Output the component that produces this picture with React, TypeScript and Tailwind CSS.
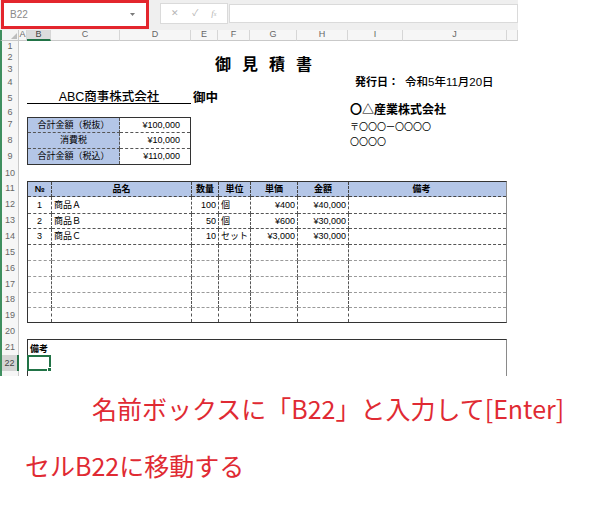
import React from "react";

// literal class lists so tailwind can see them
const ROW_START = [
  "row-start-2", "row-start-3", "row-start-4", "row-start-5", "row-start-6",
  "row-start-7", "row-start-8", "row-start-9", "row-start-10", "row-start-11",
  "row-start-12", "row-start-13", "row-start-14", "row-start-15", "row-start-16",
  "row-start-17", "row-start-18", "row-start-19", "row-start-20", "row-start-21",
  "row-start-22", "row-start-23", "row-start-24",
];

const COL_LABELS = ["A", "B", "C", "D", "E", "F", "G", "H", "I", "J", ""];

const HEADERS = ["№", "品名", "数量", "単位", "単価", "金額", "備考"];

const ITEMS = [
  ["1", "商品Ａ", "100", "個", "¥400", "¥40,000", ""],
  ["2", "商品Ｂ", "50", "個", "¥600", "¥30,000", ""],
  ["3", "商品Ｃ", "10", "セット", "¥3,000", "¥30,000", ""],
  ["", "", "", "", "", "", ""],
  ["", "", "", "", "", "", ""],
  ["", "", "", "", "", "", ""],
  ["", "", "", "", "", "", ""],
  ["", "", "", "", "", "", ""],
];

const ALIGN = [
  "justify-center",
  "justify-start pl-[2px]",
  "justify-end pr-[2px]",
  "justify-start pl-[2px]",
  "justify-end pr-[2px]",
  "justify-end pr-[2px]",
  "justify-start pl-[2px]",
];

const TOTALS = [
  ["合計金額（税抜）", "¥100,000"],
  ["消費税", "¥10,000"],
  ["合計金額（税込）", "¥110,000"],
];

const App = () => {
  return (
    <div className="w-[600px] h-[505px] bg-white overflow-hidden font-['Liberation_Sans','Noto_Sans_CJK_JP',sans-serif] text-black">
      {/* Excel window */}
      <div className="w-[518px]">
        {/* Name box + formula bar */}
        <div className="h-[30px] bg-[#efefef] flex items-start">
          <div className="ml-[1px] w-[148px] h-[29px] border-[3px] border-[#e3262d] bg-white flex items-center justify-between pl-[6px] pr-[11px]">
            <span className="text-[10px] text-[#8a8a8a]">B22</span>
            <svg width="5" height="3" viewBox="0 0 5 3">
              <path d="M0 0h5L2.5 3z" fill="#7a7a7a" />
            </svg>
          </div>
          <div className="ml-[11px] mt-[3px] w-[68px] h-[21px] bg-white border border-[#dadada] flex items-center justify-around px-[4px] text-[#b5b5b5]">
            <span className="text-[9px]">✕</span>
            <span className="text-[9px]">✓</span>
            <span className="text-[9px] italic font-['Liberation_Serif',serif]">
              f<span className="text-[6px]">x</span>
            </span>
          </div>
          <div className="ml-[1px] mt-[4px] flex-1 h-[19px] bg-white border border-[#dadada]" />
        </div>

        {/* Sheet grid */}
        <div className="grid grid-cols-[19px_8px_24px_69px_71px_27px_32px_47px_51px_55px_104px_11px] grid-rows-[11px_10px_13px_11px_15px_17px_10px_15px_16px_17px_16px_15px_17px_15px_16px_16px_16px_16px_15px_16px_16px_16px_16px_5px]">
          {/* corner */}
          <div className="row-start-1 relative bg-[#f4f4f4] border-r border-b border-[#c9c9c9] border-l-2 border-l-[#3f8f5f]">
            <div className="absolute right-[1px] bottom-[1px] w-0 h-0 border-l-[6px] border-l-transparent border-b-[6px] border-b-[#bdbdbd]" />
          </div>
          {COL_LABELS.map((c, i) => (
            <div
              key={i}
              className={
                "row-start-1 flex items-center justify-center text-[9px] border-r border-[#d6d6d6] " +
                (c === "B"
                  ? "bg-[#dcdcdc] border-b-2 border-b-[#217346] text-[#444]"
                  : "bg-[#f6f6f6] border-b border-b-[#c9c9c9] text-[#666]")
              }
            >
              {c}
            </div>
          ))}

          {/* row headers */}
          {ROW_START.map((r, i) => (
            <div
              key={r}
              className={
                "col-start-1 flex items-center justify-center text-[9px] leading-none border-l-2 border-l-[#3f8f5f] " +
                r +
                (i === 21
                  ? " bg-[#d4d4d4] border-r-2 border-r-[#217346] text-[#444]"
                  : " bg-[#f6f6f6] border-r border-r-[#c9c9c9] text-[#666]")
              }
            >
              {i < 22 ? i + 1 : ""}
            </div>
          ))}

          {/* Title */}
          <div className="col-start-2 col-span-11 row-start-3 row-span-2 flex items-center pl-[196px] text-[16px] font-bold tracking-[11px] leading-none font-['Noto_Sans_CJK_JP',sans-serif]">
            御見積書
          </div>

          {/* Issue date */}
          <div className="col-start-10 col-span-3 row-start-5 flex items-center pl-[7px] text-[11px] leading-none whitespace-nowrap">
            <span className="font-bold">発行日：</span>
            <span className="ml-[6px] text-[11.5px] font-medium">令和5年11月20日</span>
          </div>

          {/* Customer */}
          <div className="col-start-3 col-span-3 row-start-6 mb-[3px] border-b border-black flex items-end justify-center text-[12.5px] leading-none font-medium whitespace-nowrap">
            ABC商事株式会社
          </div>
          <div className="col-start-6 col-span-2 row-start-6 mb-[3px] flex items-end pl-[2px] text-[12.5px] leading-none font-semibold whitespace-nowrap">
            御中
          </div>

          {/* Supplier */}
          <div className="col-start-10 col-span-3 row-start-7 flex items-end pb-[1px] pl-[2px] text-[12px] leading-none font-bold whitespace-nowrap">
            〇△産業株式会社
          </div>
          <div className="col-start-10 col-span-3 row-start-8 flex items-end pb-[1px] pl-[2px] text-[9px] leading-none whitespace-nowrap font-['Noto_Sans_CJK_JP',sans-serif]">
            〒〇〇〇ー〇〇〇〇
          </div>
          <div className="col-start-10 col-span-3 row-start-9 flex items-end pb-[2px] pl-[2px] text-[9px] leading-none whitespace-nowrap font-['Noto_Sans_CJK_JP',sans-serif]">
            〇〇〇〇
          </div>

          {/* Totals */}
          <div className="col-start-3 col-span-3 row-start-8 row-span-3 border border-[#333] grid grid-cols-[92px_1fr] grid-rows-[15px_16px_1fr]">
            {TOTALS.map(([label, value], i) => (
              <React.Fragment key={label}>
                <div
                  className={
                    "bg-[#b4c6e7] flex items-center justify-center text-[9px] leading-none border-r border-dashed border-[#555] " +
                    (i < 2 ? "border-b" : "")
                  }
                >
                  {label}
                </div>
                <div
                  className={
                    "flex items-center justify-end pr-[10px] text-[9px] leading-none border-dashed border-[#555] " +
                    (i < 2 ? "border-b" : "")
                  }
                >
                  {value}
                </div>
              </React.Fragment>
            ))}
          </div>

          {/* Items table */}
          <div className="col-start-3 col-span-9 row-start-12 row-span-9 border border-[#333] border-r-[#8a8a8a] grid grid-cols-[24px_140px_27px_32px_47px_51px_1fr] grid-rows-[15px_17px_15px_16px_16px_16px_16px_15px_1fr]">
            {HEADERS.map((h, j) => (
              <div
                key={h}
                className={
                  "bg-[#b4c6e7] flex items-center justify-center text-[9px] font-bold leading-none border-b border-dashed border-[#444] " +
                  (j < 6 ? "border-r" : "pr-[12px]")
                }
              >
                {h}
              </div>
            ))}
            {ITEMS.map((row, i) =>
              row.map((cell, j) => (
                <div
                  key={i + "-" + j}
                  className={
                    "flex items-center text-[9px] leading-none border-dashed " +
                    ALIGN[j] +
                    (i < 3 ? " border-[#555]" : " border-[#9a9a9a]") +
                    (j < 6 ? " border-r border-r-[#555]" : "") +
                    (i < 7 ? " border-b" : "")
                  }
                >
                  {cell}
                </div>
              ))
            )}
          </div>

          {/* Notes */}
          <div className="col-start-3 col-span-9 row-start-22 row-span-3 border-t border-l border-r border-[#333] border-r-[#8a8a8a] pl-[2px] pt-[5px] text-[9px] leading-none font-bold">
            備考
          </div>

          {/* Selected cell B22 */}
          <div className="col-start-3 row-start-23 relative border-2 border-[#217346]">
            <div className="absolute -right-[3px] -bottom-[3px] w-[5px] h-[5px] bg-[#217346] border border-white" />
          </div>
        </div>
      </div>

      {/* Caption */}
      <div className="pt-[20px] font-['Noto_Sans_CJK_JP',sans-serif] text-[#e02a33]">
        <p className="pl-[92px] text-[25px] leading-[25px] whitespace-nowrap">
          名前ボックスに「B22」と入力して[Enter]
        </p>
        <p className="pl-[25px] mt-[32px] text-[25px] leading-[25px] whitespace-nowrap">
          セルB22に移動する
        </p>
      </div>
    </div>
  );
};

export default App;
